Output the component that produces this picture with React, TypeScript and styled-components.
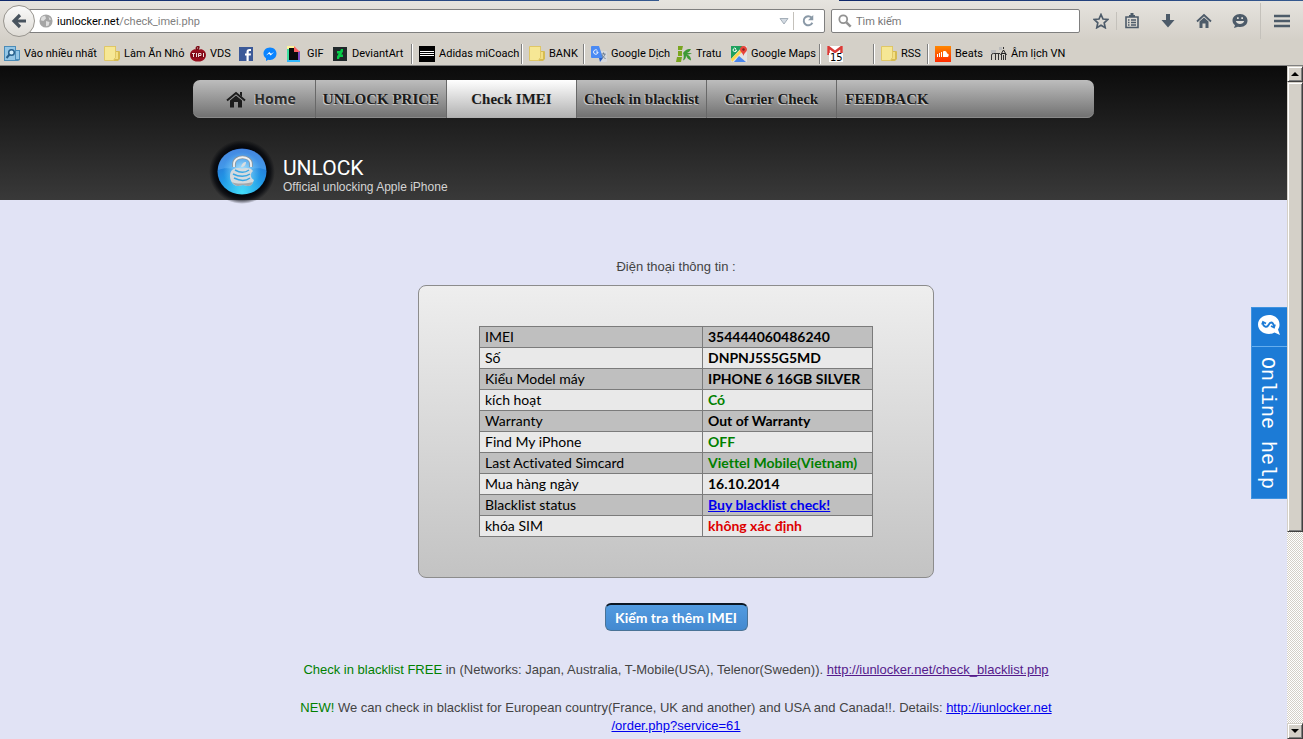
import React from "react";
import styled, { createGlobalStyle, css } from "styled-components";

const GlobalStyle = createGlobalStyle`
  * { box-sizing: border-box; }
  body { margin: 0; background: #e1e3f5; }
  button, input { font: inherit; }
`;

const sans = `"Liberation Sans", Arial, sans-serif`;
const humanist = `"Open Sans", "Noto Sans", sans-serif`;
const chromeFont = `Roboto, "Noto Sans", sans-serif`;

const Window = styled.div`
  display: flex;
  flex-direction: column;
  height: 100vh;
  overflow: hidden;
  font-family: ${sans};
`;

/* ---------- browser chrome ---------- */
const Chrome = styled.header`
  flex: none;
  background: linear-gradient(#e6e4df, #d4d0c8 40px);
  border-bottom: 1px solid #808080;
`;
const TabEdge = styled.div`
  display: flex;
  justify-content: space-between;
  height: 1px;
`;
const TitleStrip = styled.span<{ $grow: number }>`
  flex: ${(p) => p.$grow} 0 0;
  background: linear-gradient(90deg, #0e2769, #35598f);
  &:first-child { margin-right: 180px; }
`;
const Toolbar = styled.div`
  display: flex;
  align-items: center;
  height: 41px;
  padding: 0 11px 1px 3px;
  font-family: ${chromeFont};
  font-size: 11px;
`;
const BackButton = styled.button`
  display: flex;
  align-items: center;
  justify-content: center;
  flex: none;
  width: 32px;
  height: 32px;
  margin-right: -8px;
  padding: 0;
  border: 1px solid #98958f;
  border-radius: 50%;
  background: linear-gradient(#fafafa, #dedbd5);
  z-index: 1;
`;
const Field = styled.form<{ $kind: "url" | "search" }>`
  display: flex;
  align-items: center;
  height: 24px;
  border: 1px solid #7f7f7f;
  border-radius: 2px;
  background: #fff;
  ${(p) =>
    p.$kind === "url"
      ? css`flex: 1; padding: 0 6px 0 11px; gap: 4px;`
      : css`flex: 0 0 249px; margin-left: 6px; padding: 0 6px; gap: 4px;`}
`;
const Address = styled.label`
  display: flex;
  flex: 1;
  position: relative;
  color: #808080;
  b { font-weight: 400; color: #000; }
  input { position: absolute; inset: 0; width: 100%; border: 0; padding: 0; background: transparent; outline: 0; }
`;
const SearchInput = styled.input`
  flex: 1;
  min-width: 0;
  border: 0;
  padding: 0;
  outline: 0;
  background: transparent;
  &::placeholder { color: #777; opacity: 1; }
`;
const IconButton = styled.button`
  display: flex;
  align-items: center;
  justify-content: center;
  width: 20px;
  height: 20px;
  padding: 0;
  border: 0;
  background: none;
`;
const Rule = styled.span<{ $h: number }>`
  width: 1px;
  height: ${(p) => p.$h}px;
  background: #c4c1bb;
`;
const Tools = styled.div`
  display: flex;
  align-items: center;
  gap: 16px;
  margin-left: 11px;
`;
const StarTool = styled.div`
  display: flex;
  align-items: center;
  gap: 5px;
  margin-right: -11px;
`;
const MenuTool = styled.div`
  display: flex;
  align-items: center;
  gap: 11px;
  margin-left: -6px;
`;
const Bookmarks = styled.nav`
  display: flex;
  align-items: center;
  height: 23px;
  padding-left: 4px;
`;
const Mark = styled.a<{ $w: number }>`
  display: flex;
  align-items: center;
  gap: 4px;
  flex: none;
  width: ${(p) => p.$w}px;
  color: #000;
  font: 11px/16px ${chromeFont};
  text-decoration: none;
  white-space: nowrap;
  svg { flex: none; }
`;
const MarkRule = styled.span`
  flex: none;
  width: 2px;
  height: 20px;
  margin-right: 6px;
  background: #808080;
  border-right: 1px solid #fff;
`;

/* ---------- viewport ---------- */
const Viewport = styled.div`
  display: flex;
  flex: 1;
  min-height: 0;
  position: relative;
`;
const Page = styled.div`
  flex: 1;
  min-width: 0;
  overflow: hidden;
  background: #e1e3f5;
`;
const Banner = styled.div`
  height: 134px;
  padding-top: 14px;
  background: linear-gradient(#0b0b0b, #393939);
`;
const Column = styled.div`
  width: 901px;
  max-width: 100%;
  margin: 0 auto;
`;
const Menu = styled.nav`
  display: flex;
  height: 38px;
  border-radius: 7px;
  overflow: hidden;
  background: linear-gradient(#bdbdbd, #707070);
  box-shadow: inset 0 -1px #8a8a8a;
`;
const MenuItem = styled.a<{ $w: number; $active?: boolean; $home?: boolean; $last?: boolean }>`
  display: flex;
  align-items: center;
  justify-content: center;
  gap: 8px;
  width: ${(p) => p.$w}px;
  border-right: ${(p) => (p.$last ? 0 : "1px solid #686868")};
  color: #1a1a1a;
  font: bold 15px/20px "Liberation Serif", serif;
  text-decoration: none;
  white-space: nowrap;
  text-shadow: -1px 1px #c9c9c9;
  ${(p) => p.$active && css`background: linear-gradient(#fff, #b0b0b0);`}
  ${(p) => p.$home && css`padding-left: 14px; color: #2c2c2c; font: bold 14px/20px ${humanist};`}
`;
const Brand = styled.div`
  display: flex;
  align-items: flex-start;
  padding: 22px 0 0 15px;
`;
const BrandText = styled.div`
  padding: 17px 0 0 7px;
  font: 12px/14px ${sans};
  color: #d4d4d4;
  strong {
    display: block;
    font: 400 21px/23px Roboto, sans-serif;
    color: #fff;
  }
`;
const Content = styled.main`
  padding: 58px 38px 0 103px;
  text-align: center;
  color: #444;
  font-size: 13px;
  line-height: 18px;
`;
const Intro = styled.p`
  margin: 0 0 9px;
`;
const Card = styled.section`
  width: fit-content;
  margin: 0 auto;
  padding: 40px 60px;
  border: 1px solid #8c8c8c;
  border-radius: 8px;
  background: linear-gradient(#eee, #c3c3c3);
`;
const Details = styled.table`
  width: 394px;
  table-layout: fixed;
  border-collapse: collapse;
  color: #000;
  text-align: left;
  font: 14px/20px Lato, ${humanist};
  font-variant-ligatures: none;
  th, td { height: 21px; padding: 0 5px; border: 1px solid #7b7b7b; white-space: nowrap; }
  th { width: 223px; font-weight: 400; }
  td { font-weight: 700; }
  tr { background: #e9e9e9; }
  tr:nth-child(odd) { background: #bfbfbf; }
`;
const Value = styled.span<{ $tone?: string }>`
  color: ${(p) => p.$tone || "#000"};
`;
const Link = styled.a<{ $visited?: boolean }>`
  color: ${(p) => (p.$visited ? "#551a8b" : "#0000ee")};
`;
const More = styled.button`
  display: block;
  height: 28px;
  width: 143px;
  margin: 25px auto 30px;
  padding: 0;
  border: 1px solid #4a7396;
  border-top: 2px solid #0b1622;
  border-radius: 6px;
  background: linear-gradient(#529be0, #4389d0);
  color: #fff;
  font: bold 14px/20px Lato, ${humanist};
  white-space: nowrap;
`;
const Note = styled.p`
  margin: 0 0 20px;
`;
const Green = styled.span`
  color: #008000;
`;

const Help = styled.a`
  position: absolute;
  top: 241px;
  right: 16px;
  width: 36px;
  height: 192px;
  border: 1px solid #3f93e0;
  border-right: 0;
  background: #1c7bd6;
  color: #fff;
  text-decoration: none;
`;
const HelpIcon = styled.span`
  display: flex;
  align-items: center;
  justify-content: center;
  height: 39px;
  padding: 0 2px 4px 0;
  border-bottom: 1px solid #66aeee;
`;
const HelpText = styled.span`
  display: block;
  padding: 10px 3px;
  writing-mode: vertical-rl;
  font: 20px/24px "Liberation Mono", monospace;
  white-space: nowrap;
`;

const Scroll = styled.div`
  display: flex;
  flex-direction: column;
  flex: none;
  width: 16px;
  background: repeating-conic-gradient(#d4d0c8 0 25%, #fff 0 50%) 0 0 / 2px 2px;
`;
const raised = css`
  background: #d4d0c8;
  border: 1px solid;
  border-color: #d4d0c8 #404040 #404040 #d4d0c8;
  box-shadow: inset 1px 1px #fff, inset -1px -1px #808080;
`;
const ScrollButton = styled.button`
  ${raised}
  display: flex;
  align-items: center;
  justify-content: center;
  height: 16px;
  padding: 0;
`;
const Thumb = styled.div`
  ${raised}
  flex: 449 0 0;
`;
const Track = styled.div`
  flex: 192 0 0;
`;

/* ---------- icons ---------- */
const Svg = ({ s = 16, children, box = 16 }: { s?: number; box?: number; children: React.ReactNode }) => (
  <svg width={s} height={s} viewBox={`0 0 ${box} ${box}`} aria-hidden="true">{children}</svg>
);
const steel = "#4d5b69";

const Folder = () => (
  <Svg>
    <path d="M1 0h11v5h3q1 0 1 1v7l-2 2H1z" fill="#d6bb52" />
    <path d="M1 0h10v12l-2 3H1z" fill="#f6e795" />
    <path d="M.5.500h11v11l-2 3h-9z" fill="none" stroke="#e0c766" />
    <path d="M12 6h2v7h-3l1-2z" fill="#f3df83" />
  </Svg>
);
const SmartFolder = () => (
  <Svg>
    <path d="M0 0h12v4h4v10l-2 1H0z" fill="#4b8cb8" />
    <path d="M1 1h10v13H1zM12 5h3v8h-3z" fill="#94c6e6" />
    <circle cx="7.500" cy="6.500" r="2.800" fill="#d3eefc" stroke="#28608c" strokeWidth="1.500" />
    <path d="M5.500 8.500L2.500 12" stroke="#28608c" strokeWidth="2" />
  </Svg>
);
const Vds = () => (
  <Svg>
    <path d="M8 4C4 2 0 5 0 9c0 4 4 7 8 6.500 4 .5 8-2.500 8-6.500 0-4-4-7-8-5z" fill="#98101f" />
    <path d="M7 4C5 1 8 0 9 1l-1 3" fill="none" stroke="#7c0c17" strokeWidth="1.500" />
    <path d="M1 6.500h14v5H1z" fill="#7b0714" />
    <path d="M2 7.500h3M3.500 7.500V11M6.500 7v4M8.500 7.500V11M8.500 7.500h2.500v2H8.500M13.500 7v4" stroke="#f1dcdc" fill="none" />
  </Svg>
);
const Facebook = () => (
  <Svg>
    <path d="M1 1h14v14H1z" fill="#3b5998" />
    <path d="M8.500 15V9.500H7v-2h1.500V6c0-2 1-3 3-3H13v2h-1c-1 0-1.300.3-1.300 1v1.500H13l-.3 2h-2V15z" fill="#fff" />
  </Svg>
);
const Messenger = () => (
  <Svg>
    <path d="M8 1.500c-4 0-6.500 2.800-6.500 6 0 2 .9 3.600 2.500 4.700V15l2.300-1.300c4.700 1 8.200-2 8.200-6.200 0-3.200-2.500-6-6.500-6z" fill="#0a84ff" />
    <path d="M4 9.500l3.300-3.500 1.700 1.700L12 6 8.700 9.500 7 7.800z" fill="#fff" />
  </Svg>
);
const Gif = () => (
  <Svg>
    <path d="M0 0h8v3H0z" fill="#fff59a" />
    <path d="M0 3h2v11H0z" fill="#3ee0a0" />
    <path d="M11 5h2v9h-2z" fill="#7d4bc0" />
    <path d="M0 14h13v2H0z" fill="#30b8ff" />
    <path d="M2 2h6v4h3v8H2z" fill="#0b0b0b" />
    <path d="M7 0v6h6z" fill="#ff6161" />
  </Svg>
);
const Deviant = () => (
  <Svg>
    <path d="M1 1h14v14H1z" fill="#20292b" />
    <path d="M11 3v2.500L9.300 8.500H11V11H7.800L7 13H5v-2.500L6.700 7.500H5V5h3.200L9 3z" fill="#05cc47" />
  </Svg>
);
const Adidas = () => (
  <Svg>
    <path d="M0 0h16v16H0z" fill="#000" />
    <path d="M1 5.500h14M1 7.500h14M1 9.500h14" stroke="#fff" />
  </Svg>
);
const Translate = () => (
  <Svg>
    <path d="M6 5h9q1 0 1 1v9q0 1-1 1H9z" fill="#d7d9dd" />
    <path d="M1 0h7l4 12H1q-1 0-1-1V1q0-1 1-1z" fill="#4a8af4" />
    <path d="M8 12h4l-3 4z" fill="#2b5fc0" />
    <path d="M7 6H5.200M7 6a2.200 2.200 0 1 1-.7-1.600" stroke="#fff" fill="none" />
    <path d="M10.500 8h4M12.500 6.500V8M14 8c-.5 2-2 3.500-3 4M11 9c.5 1.500 2 3 3.500 3.500" stroke="#687b90" fill="none" />
  </Svg>
);
const Tratu = () => (
  <Svg>
    <path d="M2 0h5L6 4H2zM2 5h4v5H2zM1 11h5l-1 5H0z" fill="#7aa51f" />
    <path d="M7 7c3-4 5-4 8-4-1 2-2 3-4 4h5c-2 1-3 1.500-5 1.500 3 1 4 3 4 6-3-1-4-3-5-5 0 3-1 4-3 5 1-3 1-5 0-7.500z" fill="#3c9a35" />
  </Svg>
);
const Maps = () => (
  <Svg>
    <path d="M0 0h16v16H0z" fill="#e4e4e4" />
    <path d="M0 0h12L0 13z" fill="#1fa15d" />
    <path d="M0 13L12 1l2 2L1 16z" fill="#ffd64b" />
    <path d="M3 16l5-6 7 6z" fill="#4a87ef" />
    <path d="M12.500 0C10 0 9 2 9 3.500 9 6 12 7 12.500 10 13 7 16 6 16 3.500 16 2 15 0 12.500 0z" fill="#e8453c" />
    <circle cx="12.500" cy="3.500" r="1.200" fill="#7b231e" />
    <path d="M5.500 4H4M5.500 4a1.700 1.700 0 1 1-.5-1.300" stroke="#fff" fill="none" />
  </Svg>
);
const Gmail = () => (
  <Svg>
    <path d="M0 0h16v8H0z" fill="#fff" />
    <path d="M1.500 9V1L8 6l6.500-5v8" fill="none" stroke="#d93a35" strokeWidth="2.500" />
    <path d="M2 7h14v9H2z" fill="#fff" />
    <text x="3" y="15" fontFamily="DejaVu Sans" fontSize="10" fill="#000">15</text>
  </Svg>
);
const Cloud = () => (
  <Svg>
    <defs><linearGradient id="snd" x2="0" y2="1"><stop stopColor="#ff8800" /><stop offset="1" stopColor="#ff2a00" /></linearGradient></defs>
    <path d="M0 0h16v16H0z" fill="url(#snd)" />
    <path d="M2.500 8v3M4.500 7v4M6.500 6v5" stroke="#fff" />
    <path d="M8 5.500c3-1.500 4 1 4 2 2-.5 2.500 3.500 0 3.500H8z" fill="#fff" />
  </Svg>
);
const Temple = () => (
  <Svg>
    <path d="M0 4h5v3H0zM8 1h3v3H8z" fill="#bcbcbc" />
    <path d="M.5 14V9q0-1.500 2-1.500H9M4.500 14V7.500M7.500 14V7.500M10.500 14V8M14.500 14V8M12.500 3V1M12.500 9v5" fill="none" stroke="#333" />
    <path d="M9.500 9l3-5 3 5M10.500 7.500h4" fill="none" stroke="#222" />
  </Svg>
);

const Down = () => <svg width="8" height="4" viewBox="0 0 8 4" aria-hidden="true"><path d="M0 0h8L4 4z" /></svg>;
const Up = () => <svg width="8" height="4" viewBox="0 0 8 4" aria-hidden="true"><path d="M0 4h8L4 0z" /></svg>;

const Logo = () => (
  <svg width="68" height="64" viewBox="0 0 68 64" aria-hidden="true">
    <defs>
      <radialGradient id="halo"><stop offset=".76" stopColor="#05070c" /><stop offset=".86" stopColor="#05070c" stopOpacity=".75" /><stop offset="1" stopColor="#05070c" stopOpacity="0" /></radialGradient>
      <radialGradient id="orb" cx=".5" cy=".95" r=".95"><stop stopColor="#43dcf8" /><stop offset=".5" stopColor="#2196e6" /><stop offset="1" stopColor="#2b66d0" /></radialGradient>
      <radialGradient id="glow"><stop stopColor="#c9f1ff" stopOpacity=".95" /><stop offset="1" stopColor="#7ccdf8" stopOpacity="0" /></radialGradient>
    </defs>
    <ellipse cx="34" cy="32" rx="33" ry="32" fill="url(#halo)" />
    <ellipse cx="34" cy="31.500" rx="24.500" ry="23" fill="url(#orb)" />
    <path d="M10 30c10-4 15 0 24 0s16-4 24 0c0-13-10-21-24-21S10 18 10 30z" fill="#6db8fa" opacity=".4" />
    <ellipse cx="34" cy="31" rx="19" ry="19" fill="url(#glow)" />
    <path d="M26 27v-3c0-9 17-9 17 0v3" fill="none" stroke="#8b949c" strokeWidth="3.500" />
    <path d="M26 27v-3c0-9 17-9 17 0v3" fill="none" stroke="#eef1f3" strokeWidth="1.800" />
    <path d="M33 27c1-4 3-5 5-5 0 3-2 5-5 5z" fill="#d9dde0" />
    <path d="M34 29c-4-2-12-1-12 7 0 6 4 10 8 10 2 0 3-1 5-1s3 1 5 1c3 0 5-3 6-6-4-2-4-7-1-9-3-4-8-3-11-2z" fill="#d4dade" />
    <path d="M24 42c4 2 12 2 21 0-1 3-3 4-5 4s-3-1-5-1-3 1-5 1c-2 0-5-2-6-4z" fill="#a3a8ad" />
    <path d="M27 30c5 3 10 3 14 0M25 34c6 3 13 3 17 0M26 38c6 3 12 3 16 0" fill="none" stroke="#36a6e4" strokeWidth="1.500" />
  </svg>
);

const marks: Array<[string, number, React.ComponentType] | null> = [
  ["Vào nhiều nhất", 100, SmartFolder],
  ["Làm Ăn Nhỏ", 86, Folder],
  ["VDS", 48, Vds],
  ["", 24, Facebook],
  ["", 25, Messenger],
  ["GIF", 45, Gif],
  ["DeviantArt", 79, Deviant],
  null,
  ["Adidas miCoach", 102, Adidas],
  null,
  ["BANK", 54, Folder],
  null,
  ["Google Dịch", 85, Translate],
  ["Tratu", 55, Tratu],
  ["Google Maps", 88, Maps],
  null,
  ["", 46, Gmail],
  null,
  ["RSS", 46, Folder],
  null,
  ["Beats", 56, Cloud],
  ["Âm lịch VN", 76, Temple],
];

const green = "#008000";
const rows: Array<[string, string, string?]> = [
  ["IMEI", "354444060486240"],
  ["Số", "DNPNJ5S5G5MD"],
  ["Kiểu Model máy", "IPHONE 6 16GB SILVER"],
  ["kích hoạt", "Có", green],
  ["Warranty", "Out of Warranty"],
  ["Find My iPhone", "OFF", green],
  ["Last Activated Simcard", "Viettel Mobile(Vietnam)", green],
  ["Mua hàng ngày", "16.10.2014"],
  ["Blacklist status", "Buy blacklist check!", "link"],
  ["khóa SIM", "không xác định", "#dd0000"],
];

export default function App() {
  return (
    <Window>
      <GlobalStyle />
      <Chrome>
        <TabEdge><TitleStrip $grow={659} /><TitleStrip $grow={464} /></TabEdge>
        <Toolbar>
          <BackButton type="button" aria-label="Back">
            <Svg><path d="M9 2L3 8l6 6M3 8h12" fill="none" stroke="#48535e" strokeWidth="3.200" /></Svg>
          </BackButton>
          <Field $kind="url">
            <Svg s={14}>
              <circle cx="8" cy="8" r="7.500" fill="#a5a5a5" />
              <path d="M3 3l4-1 1 3-3 3-3-1zM8 8l4 1-1 4-3 1zM11 3l3 3-2 1z" fill="#dedede" />
            </Svg>
            <Address>
              <b>iunlocker.net</b>/check_imei.php
              <input aria-label="Address" />
            </Address>
            <Svg s={10} box={10}><path d="M1 2.500h8L5 8z" fill="#d3dae2" stroke="#a5afb9" /></Svg>
            <Rule $h={18} />
            <IconButton type="button" aria-label="Reload">
              <Svg s={14}><path d="M13 10a5.200 5.200 0 1 1-1-6" fill="none" stroke="#8a99a7" strokeWidth="2.200" /><path d="M14 1v6H8z" fill="#8a99a7" /></Svg>
            </IconButton>
          </Field>
          <Field $kind="search">
            <Svg s={14}><circle cx="6" cy="6" r="4.500" fill="none" stroke="#929292" strokeWidth="2" /><path d="M9.500 9.500l5 5" stroke="#929292" strokeWidth="2.800" /></Svg>
            <SearchInput aria-label="Search" placeholder="Tìm kiếm" />
          </Field>
          <Tools>
            <StarTool>
              <IconButton type="button" aria-label="Bookmark this page">
                <Svg><path d="M8 1.500l2 4.500 4.800.5-3.600 3.300 1 4.900L8 12.200l-4.200 2.500 1-4.900L1.200 6.500 6 6z" fill="none" stroke={steel} strokeWidth="1.700" /></Svg>
              </IconButton>
              <Rule $h={18} />
            </StarTool>
            <IconButton type="button" aria-label="Show bookmarks">
              <Svg><path d="M2 4h12v10.500H2z" fill="none" stroke={steel} strokeWidth="1.600" /><path d="M5 4V2h1.500V0h3v2H11v2z" fill={steel} /><path d="M4 7h1.500M7 7h5M4 9.500h1.500M7 9.500h5M4 12h1.500M7 12h5" stroke={steel} strokeWidth="1.300" /></Svg>
            </IconButton>
            <IconButton type="button" aria-label="Downloads">
              <Svg><path d="M6 1h4v6h4.500L8 14.500 1.500 7H6z" fill={steel} /></Svg>
            </IconButton>
            <IconButton type="button" aria-label="Home">
              <Svg><path d="M1 8.500L8 2l7 6.500" fill="none" stroke={steel} strokeWidth="1.800" /><path d="M3.500 8.500L8 4.500l4.500 4V15h-3v-4.500h-3V15h-3z" fill={steel} /></Svg>
            </IconButton>
            <IconButton type="button" aria-label="Chat">
              <Svg><path d="M8 1C3.500 1 .5 4 .5 7.500c0 2 1 3.500 2.500 4.700L2 15l4-1.300c6 1 9.500-2 9.500-6.200C15.500 4 12.500 1 8 1z" fill={steel} /><path d="M5 5.200h1.700M9.300 5.200H11" stroke="#e1dfda" strokeWidth="1.800" /><path d="M3.800 8h8.400c-1 4-7.400 4-8.400 0z" fill="#e1dfda" /></Svg>
            </IconButton>
            <MenuTool>
              <Rule $h={36} />
              <IconButton type="button" aria-label="Menu">
                <Svg><path d="M0 3h16M0 8h16M0 13h16" stroke={steel} strokeWidth="2.400" /></Svg>
              </IconButton>
            </MenuTool>
          </Tools>
        </Toolbar>
        <Bookmarks aria-label="Bookmarks">
          {marks.map((m, i) => {
            if (!m) return <MarkRule key={i} />;
            const [label, w, Icon] = m;
            return <Mark key={i} href="#" $w={w}><Icon />{label}</Mark>;
          })}
        </Bookmarks>
      </Chrome>

      <Viewport>
        <Page>
          <Banner>
            <Column>
              <Menu>
                <MenuItem href="#" $w={123} $home>
                  <svg width="20" height="17" viewBox="0 0 20 17" aria-hidden="true">
                    <path d="M1 9.500L10 2l9 7.500" fill="none" stroke="#1c1c1c" strokeWidth="2" />
                    <path d="M4 9.500l6-5 6 5v7h-4V11H8v5.500H4zM14 1h2v5l-2-2z" fill="#1c1c1c" />
                  </svg>
                  Home
                </MenuItem>
                <MenuItem href="#" $w={131}>UNLOCK PRICE</MenuItem>
                <MenuItem href="#" $w={130} $active>Check IMEI</MenuItem>
                <MenuItem href="#" $w={130}>Check in blacklist</MenuItem>
                <MenuItem href="#" $w={130}>Carrier Check</MenuItem>
                <MenuItem href="#" $w={100} $last>FEEDBACK</MenuItem>
              </Menu>
              <Brand>
                <Logo />
                <BrandText><strong>UNLOCK</strong>Official unlocking Apple iPhone</BrandText>
              </Brand>
            </Column>
          </Banner>
          <Column>
            <Content>
              <Intro>Điện thoại thông tin :</Intro>
              <Card>
                <Details>
                  <tbody>
                    {rows.map(([name, value, tone]) => (
                      <tr key={name}>
                        <th scope="row">{name}</th>
                        <td>{tone === "link" ? <Link href="#">{value}</Link> : <Value $tone={tone}>{value}</Value>}</td>
                      </tr>
                    ))}
                  </tbody>
                </Details>
              </Card>
              <More type="button">Kiểm tra thêm IMEI</More>
              <Note>
                <Green>Check in blacklist FREE</Green> in (Networks: Japan, Australia, T-Mobile(USA), Telenor(Sweden)).{" "}
                <Link href="#" $visited>http://iunlocker.net/check_blacklist.php</Link>
              </Note>
              <Note>
                <Green>NEW!</Green> We can check in blacklist for European country(France, UK and another) and USA and Canada!!. Details:{" "}
                <Link href="#">http://iunlocker.net<wbr />/order.php?service=61</Link>
              </Note>
            </Content>
          </Column>
        </Page>
        <Scroll>
          <ScrollButton type="button" aria-label="Scroll up"><Up /></ScrollButton>
          <Thumb />
          <Track />
          <ScrollButton type="button" aria-label="Scroll down"><Down /></ScrollButton>
        </Scroll>
        <Help href="#">
          <HelpIcon>
            <svg width="22" height="20" viewBox="0 0 22 20" aria-hidden="true">
              <path d="M11 0C5 0 0 4 0 9.500S5 19 11 19c2 0 4-.5 5.500-1.500L22 20l-2-5.500c1-1.500 1.500-3 1.500-5C21.500 4 17 0 11 0z" fill="#fff" />
              <path d="M5 8c0 4 4 5 5.500 2s4-4 5.500 1M4 9.500L5 7l3 1.500M17 9.500l-1 3-3-1.500" fill="none" stroke="#1c7bd6" strokeWidth="1.800" />
            </svg>
          </HelpIcon>
          <HelpText>Online help</HelpText>
        </Help>
      </Viewport>
    </Window>
  );
}
